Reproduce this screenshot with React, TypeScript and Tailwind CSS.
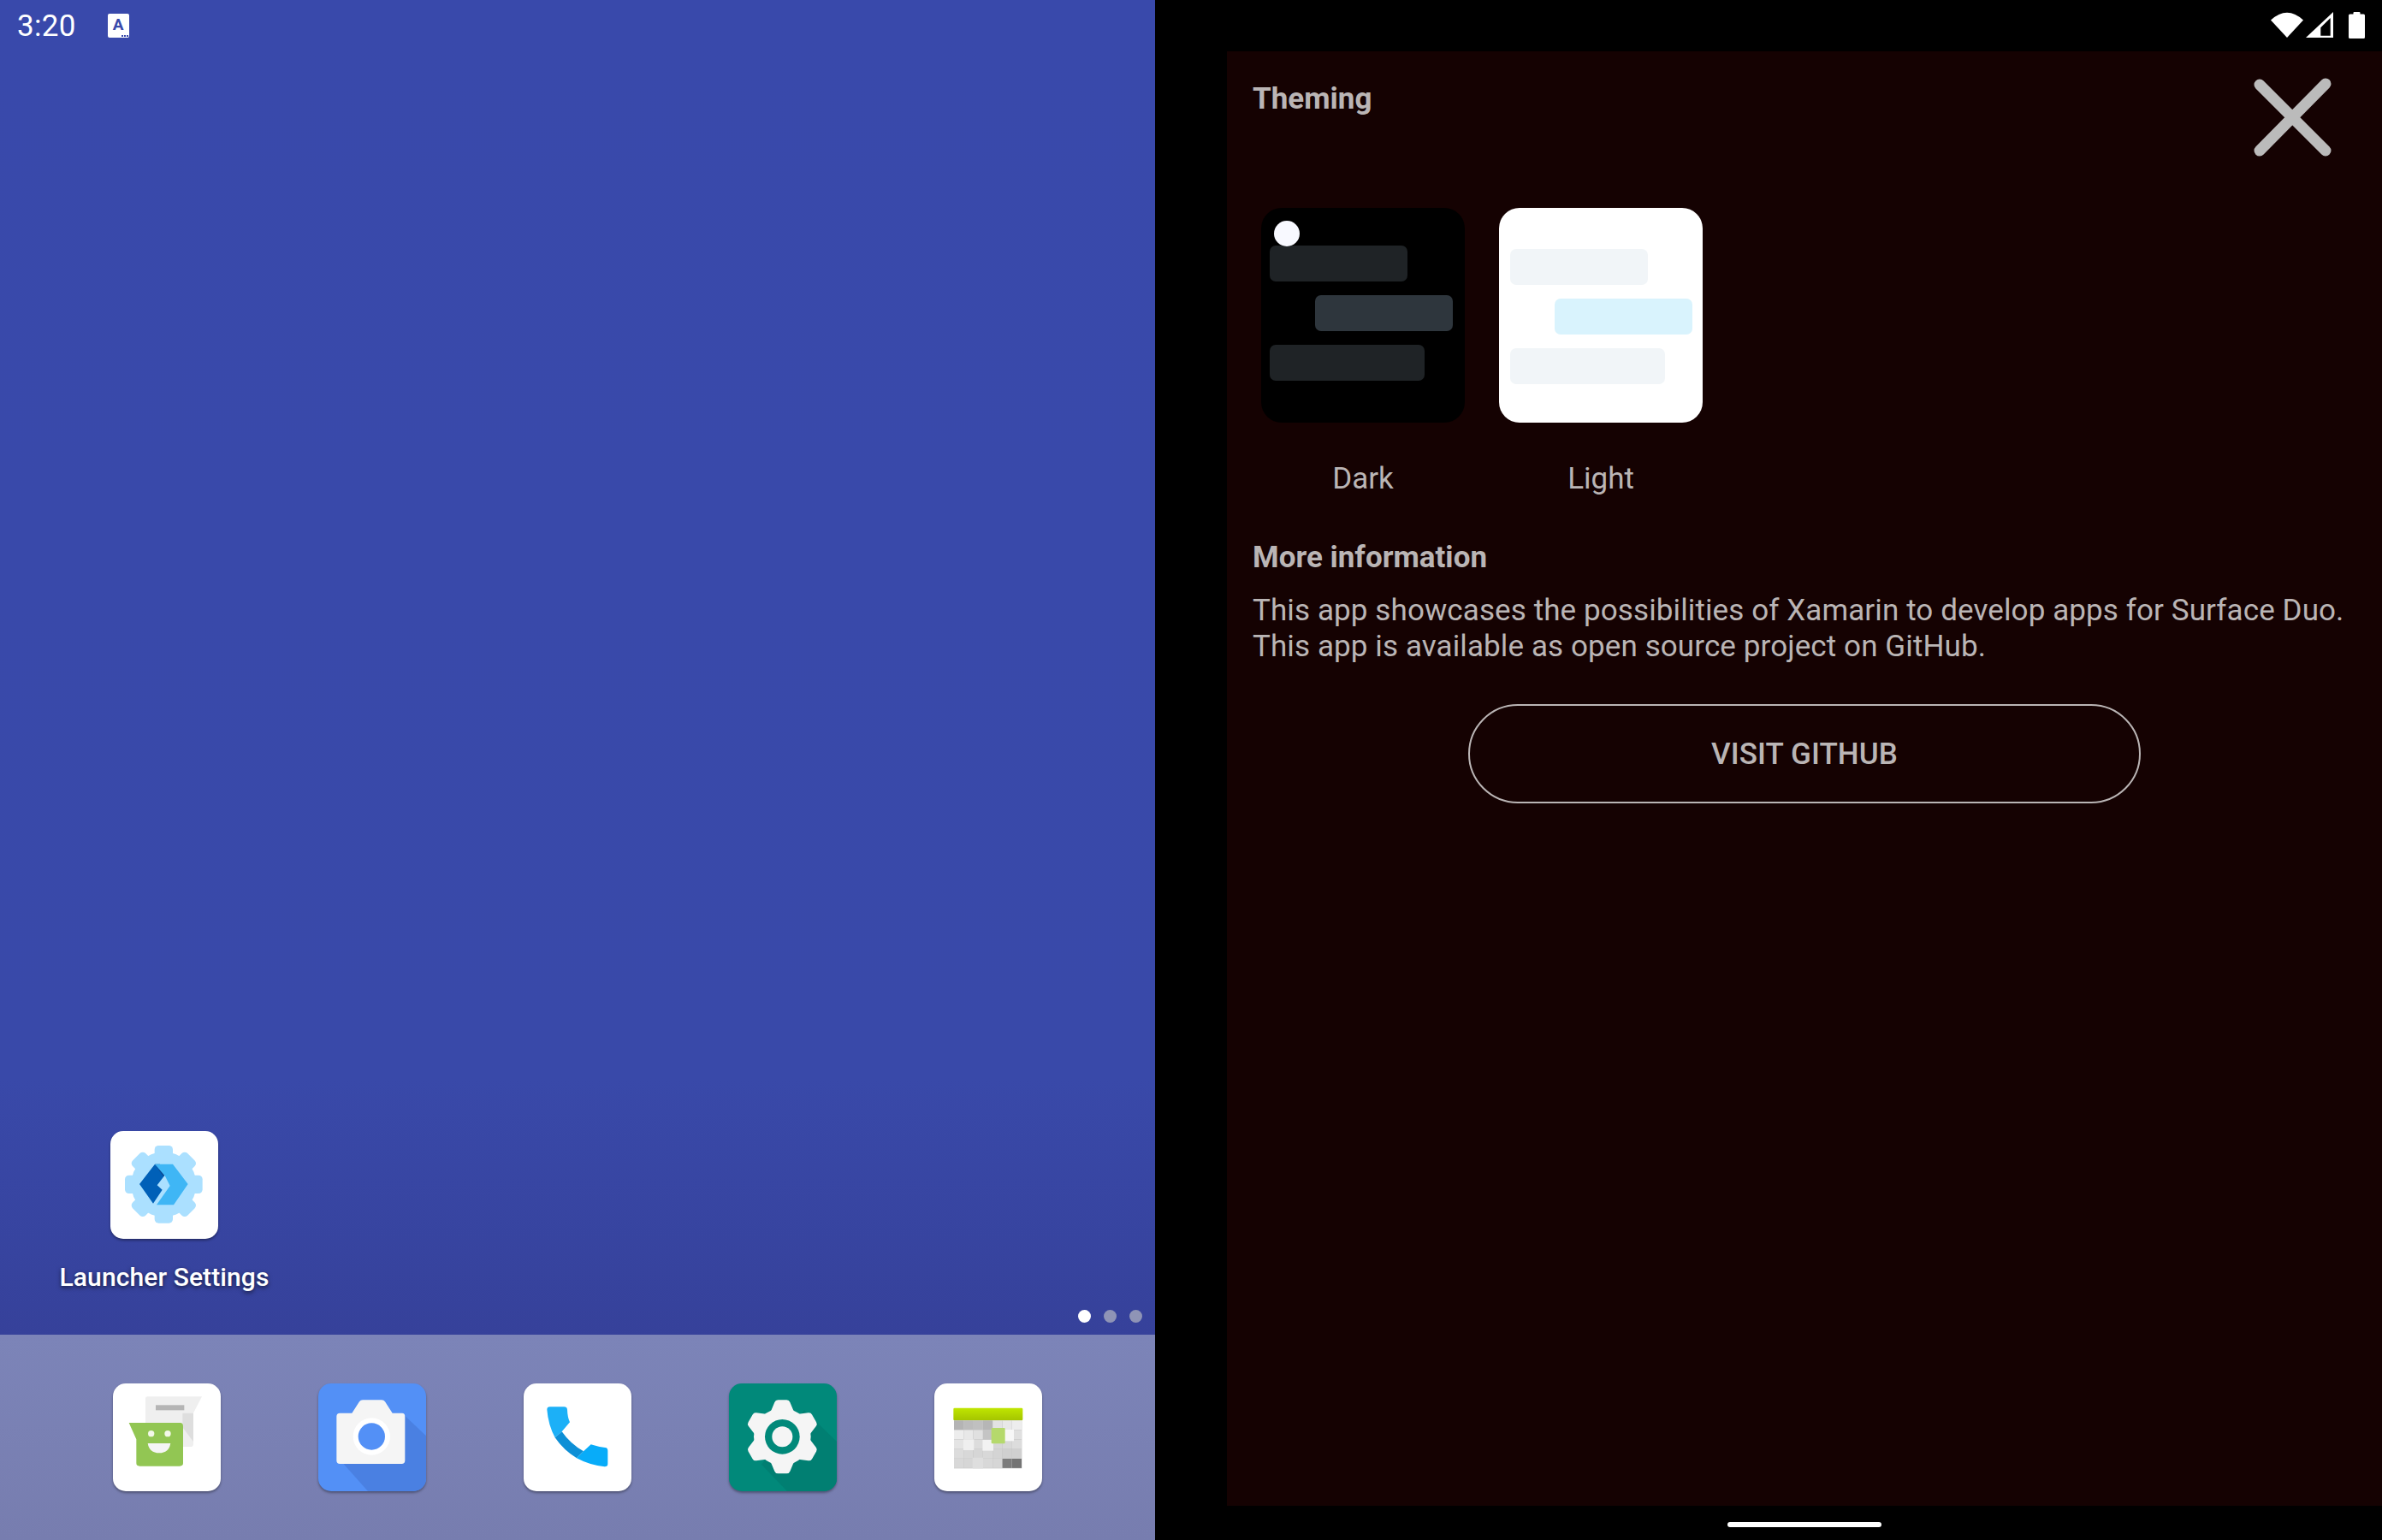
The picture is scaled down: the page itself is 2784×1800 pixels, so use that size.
import React from "react";

function Tile({ children, className = "" }: { children: React.ReactNode; className?: string }) {
  return (
    <div className={`w-[126px] h-[126px] rounded-[15px] overflow-hidden shrink-0 shadow-[0_2px_3px_rgba(0,0,0,0.35)] ${className}`}>
      <svg width="126" height="126" viewBox="36 36 378 378">{children}</svg>
    </div>
  );
}

const rot8 = [0, 45, 90, 135, 180, 225, 270, 315];
const rot6 = [0, 60, 120, 180, 240, 300];

function LauncherIcon() {
  return (
    <Tile className="bg-white">
      <g fill="#abe0ff">
        <circle cx="223" cy="223" r="114" />
        {rot8.map((r) => (
          <rect key={r} x="191" y="87" width="64" height="60" rx="14" transform={`rotate(${r} 223 223)`} />
        ))}
      </g>
      <path d="M192 152 L138 222 L186 290 L218 242 L200 226 L226 192 Z" fill="#0060b8" />
      <path d="M192 152 L210 152 L228 188 L222 196 Z" fill="#0a4a94" />
      <path d="M192 152 L255 152 L308 222 L258 295 L198 295 L245 228 L228 194 Z" fill="#3fb6f5" />
    </Tile>
  );
}

function MessagesIcon() {
  return (
    <Tile className="bg-white">
      <path d="M150 88 Q150 82 158 82 L348 82 L318 140 L318 248 Q318 258 308 258 L150 258 Z" fill="#efefef" />
      <path d="M280 190 L318 240 L318 140 L280 140 Z" fill="#dedede" />
      <rect x="186" y="112" width="100" height="18" fill="#b5b5b5" />
      <path d="M92 174 L272 174 Q282 174 282 186 L282 316 Q282 326 270 326 L130 326 Q118 326 118 316 L118 232 Z" fill="#92c653" />
      <circle cx="170" cy="212" r="11" fill="#f3f8e8" />
      <circle cx="228" cy="212" r="11" fill="#f3f8e8" />
      <path d="M158 246 L238 246 Q232 280 198 280 Q164 280 158 246 Z" fill="#f5f5f5" />
    </Tile>
  );
}

function CameraIcon() {
  return (
    <Tile className="bg-[#5390f6]">
      <path d="M330 140 L414 220 L414 414 L210 414 L100 290 Z" fill="#4a80e2" />
      <path d="M100 152 Q100 140 112 140 L154 140 L180 100 Q184 94 192 94 L258 94 Q266 94 270 100 L296 140 L330 140 Q340 140 340 152 L340 306 Q340 318 328 318 L112 318 Q100 318 100 306 Z" fill="#f5f5f5" />
      <circle cx="223" cy="222" r="65" fill="#ffffff" />
      <circle cx="223" cy="222" r="47" fill="#5390f6" />
    </Tile>
  );
}

function PhoneIcon() {
  return (
    <Tile className="bg-white">
      <path d="M118 128 Q118 118 128 118 L178 118 Q188 118 189 128 Q190 155 198 172 L170 205 L146 226 Q122 180 118 128 Z" fill="#1cb0f7" />
      <path d="M146 226 L170 205 Q200 248 246 274 L222 298 Q176 270 146 226 Z" fill="#0d8fd6" />
      <path d="M222 298 L246 274 L272 250 Q296 258 322 261 Q331 262 331 272 L331 318 Q331 328 320 328 Q266 322 222 298 Z" fill="#08acf9" />
    </Tile>
  );
}

function SettingsIcon() {
  return (
    <Tile className="bg-[#01897a]">
      <path d="M300 130 L414 240 L414 414 L240 414 L150 320 Z" fill="#017f72" />
      <g fill="#f5f5f5">
        <circle cx="223" cy="223" r="100" />
        {rot6.map((r) => (
          <path key={r} d="M176 150 L196 102 Q199 94 208 94 L238 94 Q247 94 250 102 L270 150 Z" transform={`rotate(${r} 223 223)`} />
        ))}
      </g>
      <circle cx="223" cy="223" r="61" fill="#01897a" />
      <circle cx="223" cy="223" r="36" fill="#f5f5f5" />
    </Tile>
  );
}

const calColors = [
  ["#b4b4b4", "#bcbcbc", "#c0c0c0", "#b6b6b6", "#e2e2e2", "#e8e8e8", "#ededed"],
  ["#ededed", "#e8e8e8", "#e0e0e0", "#c4c4c4", "#d8d8d8", "#dadada", "#e0e0e0"],
  ["#e4e4e4", "#e0e0e0", "#dcdcdc", "#d8d8d8", "#d6d6d6", "#d8d8d8", "#dcdcdc"],
  ["#dcdcdc", "#d8d8d8", "#d6d6d6", "#d8d8d8", "#d4d4d4", "#d0d0d0", "#d0d0d0"],
  ["#d8d8d8", "#d6d6d6", "#d4d4d4", "#d8d8d8", "#d6d6d6", "#7c7c7c", "#747474"],
];

function CalendarIcon() {
  return (
    <Tile className="bg-white">
      <defs>
        <linearGradient id="calg" x1="0" y1="0" x2="0" y2="1">
          <stop offset="0" stopColor="#c0e600" />
          <stop offset="1" stopColor="#a4c400" />
        </linearGradient>
      </defs>
      <rect x="103" y="122" width="243" height="44" rx="4" fill="url(#calg)" />
      <rect x="105" y="166" width="238" height="168" fill="#c4c4c4" />
      {calColors.map((row, r) =>
        row.map((c, i) => (
          <rect key={`${r}-${i}`} x={105 + i * 34} y={166 + r * 33.5} width="33" height="32.5" fill={c} />
        ))
      )}
      <rect x="138" y="232" width="37" height="38" fill="#efefef" />
      <rect x="205" y="234" width="38" height="38" fill="#f2f2f2" />
      <rect x="282" y="198" width="33" height="40" fill="#f7f7f7" />
      <rect x="170" y="296" width="37" height="38" fill="#dedede" />
      <rect x="236" y="192" width="48" height="55" rx="3" fill="#b5d96c" />
    </Tile>
  );
}

function ThemeCard({ light, label }: { light?: boolean; label: string }) {
  return (
    <div className="w-[238px] flex flex-col items-center">
      <div
        className={`relative w-[238px] h-[251px] rounded-[24px] flex flex-col gap-[16px] ${
          light ? "bg-white pt-[48px] pl-[13px] pr-[12px]" : "bg-black pt-[44px] pl-[10px] pr-[14px]"
        }`}
      >
        {!light && <div className="absolute left-[15px] top-[15px] w-[30px] h-[30px] rounded-full bg-[#f8f9ff]" />}
        <div className={`w-[161px] h-[42px] rounded-[7px] ${light ? "bg-[#f1f5f8]" : "bg-[#1f2326]"}`} />
        <div className={`w-[161px] h-[42px] rounded-[7px] self-end ${light ? "bg-[#d9f3fd]" : "bg-[#2e363d]"}`} />
        <div className={`w-[181px] h-[42px] rounded-[7px] ${light ? "bg-[#f1f5f8]" : "bg-[#1f2326]"}`} />
      </div>
      <div className="mt-[45px] text-[35px] leading-[41px]">{label}</div>
    </div>
  );
}

export default function App() {
  return (
    <div className="w-[2784px] h-[1800px] flex overflow-hidden bg-black font-['Roboto',sans-serif]">
      <div className="w-[1350px] h-full flex flex-col bg-[linear-gradient(to_bottom,#3949ab_0%,#3949a9_70%,#36419a_87%,#36419a_100%)]">
        <div className="h-[60px] flex items-center pl-[20px] text-white">
          <span className="text-[35px] leading-[41px] tracking-[0.3px]">3:20</span>
          <div className="relative ml-[37px] -mt-[1px] w-[25px] h-[28px] rounded-[2px] bg-white flex justify-center">
            <span className="text-[#3949ab] text-[19px] leading-[26px] font-bold">A</span>
            <div className="absolute right-[1px] bottom-[1px] flex gap-[1px]">
              <div className="w-[2px] h-[2px] bg-[#3949ab]" />
              <div className="w-[2px] h-[2px] bg-[#3949ab]" />
              <div className="w-[2px] h-[2px] bg-[#3949ab]" />
            </div>
          </div>
        </div>
        <div className="flex-1" />
        <div className="w-[384px] flex flex-col items-center">
          <LauncherIcon />
          <div className="mt-[27px] text-white font-medium text-[30px] leading-[35px] tracking-[0.1px] whitespace-nowrap [text-shadow:0_2px_5px_rgba(0,0,0,0.6)]">
            Launcher Settings
          </div>
        </div>
        <div className="mt-[21px] mb-[14px] flex justify-end gap-[15px] pr-[15px]">
          <div className="w-[15px] h-[15px] rounded-full bg-white" />
          <div className="w-[15px] h-[15px] rounded-full bg-[#8f94b6]" />
          <div className="w-[15px] h-[15px] rounded-full bg-[#8f94b6]" />
        </div>
        <div className="h-[240px] pl-[132px] pt-[57px] flex gap-[114px] bg-[linear-gradient(to_bottom,#7c84b8,#777daf)]">
          <MessagesIcon />
          <CameraIcon />
          <PhoneIcon />
          <SettingsIcon />
          <CalendarIcon />
        </div>
      </div>

      <div className="w-[84px] h-full bg-black" />

      <div className="flex-1 h-full flex flex-col bg-black">
        <div className="h-[60px] flex items-start justify-end pr-[20px] pt-[13px] gap-[3px]">
          <svg width="38" height="31" viewBox="0 0 38 31">
            <path d="M0 10.5 Q19 -7 38 10.5 L19 31 Z" fill="#fff" />
          </svg>
          <svg width="32" height="32" viewBox="0 0 32 32">
            <path d="M0 31 L32 1 L32 31 Z" fill="#fff" />
            <path d="M17.3 19.3 L28.7 8 L28.7 28.7 L17.3 28.7 Z" fill="#000" />
          </svg>
          <svg className="ml-[15px]" width="19" height="32" viewBox="0 0 19 32">
            <path d="M5.5 2 Q5.5 1 6.5 1 L12.5 1 Q13.5 1 13.5 2 L13.5 3.5 L17.5 3.5 Q19 3.5 19 5 L19 30.5 Q19 32 17.5 32 L1.5 32 Q0 32 0 30.5 L0 5 Q0 3.5 1.5 3.5 L5.5 3.5 Z" fill="#fff" />
          </svg>
        </div>

        <div className="flex-1 bg-[#150202] pt-[35px] pl-[30px] pr-[30px] text-[#bab5b5] text-[35px]">
          <div className="flex items-start justify-between pr-[29px] mb-[60px]">
            <div className="font-bold leading-[41px]">Theming</div>
            <svg className="-mt-[4px]" width="92" height="92" viewBox="0 0 92 92">
              <path d="M8 8 L85 85 M85 7 L8 85" stroke="#bbbbbb" strokeWidth="13" strokeLinecap="round" fill="none" />
            </svg>
          </div>

          <div className="flex gap-[40px] pl-[10px]">
            <ThemeCard label="Dark" />
            <ThemeCard light label="Light" />
          </div>

          <div className="mt-[51px] font-bold leading-[41px]">More information</div>
          <p className="mt-[21px] leading-[42px] tracking-[0.1px]">
            This app showcases the possibilities of Xamarin to develop apps for Surface Duo.
            <br />
            This app is available as open source project on GitHub.
          </p>

          <div className="mt-[46px] mx-auto w-[786px] h-[116px] rounded-[58px] border-2 border-[#bab5b5] flex items-center justify-center font-medium pt-[3px] tracking-[0.1px]">
            VISIT GITHUB
          </div>
        </div>

        <div className="h-[40px] flex justify-center pt-[19px]">
          <div className="w-[180px] h-[6px] rounded-full bg-white" />
        </div>
      </div>
    </div>
  );
}
